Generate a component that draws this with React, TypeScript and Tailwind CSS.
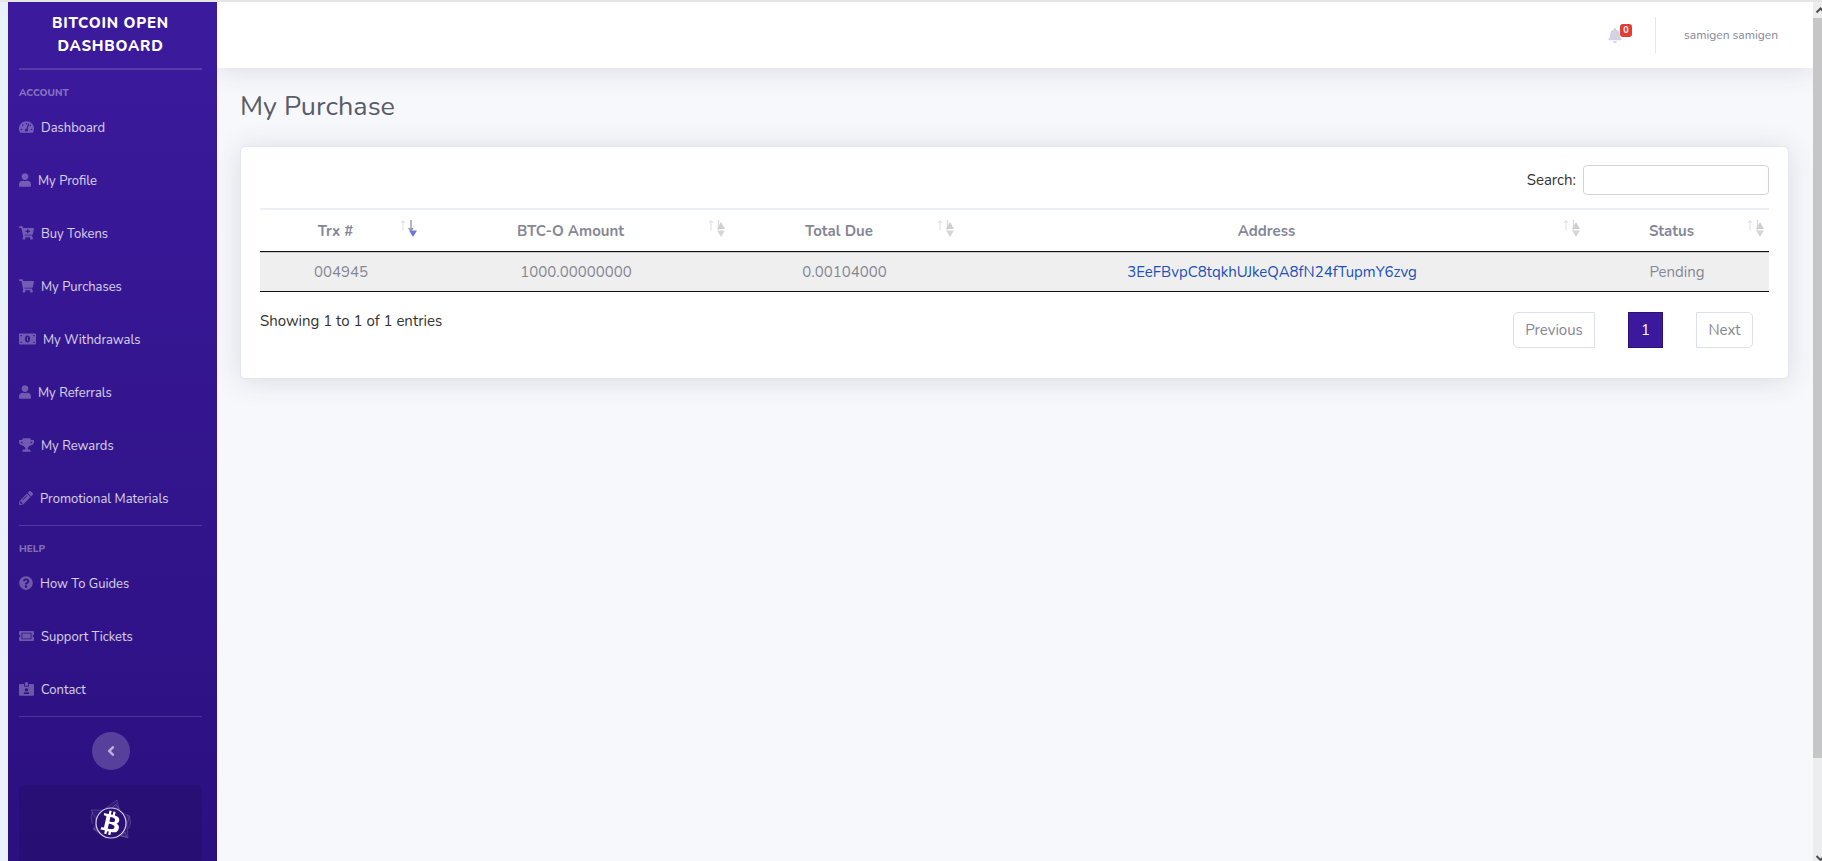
import {
  FaAngleLeft,
  FaBell,
  FaBtc,
  FaCartPlus,
  FaIdCardAlt,
  FaPencilAlt,
  FaQuestionCircle,
  FaShoppingCart,
  FaTachometerAlt,
  FaTicketAlt,
  FaTrophy,
  FaUser,
} from "react-icons/fa";

// solid banknote with a round cut-out and notched corners
function MoneyBill({ className }: { className?: string }) {
  return (
    <svg viewBox="0 0 17 14" className={className} fill="currentColor">
      <path
        fillRule="evenodd"
        d="M1 1.5 H16 A1 1 0 0 1 17 2.5 V11.5 A1 1 0 0 1 16 12.5 H1 A1 1 0 0 1 0 11.5 V2.5 A1 1 0 0 1 1 1.5 Z M8.5 3.6 C6.9 3.6 5.9 5.1 5.9 7 S6.9 10.4 8.5 10.4 S11.1 8.9 11.1 7 S10.1 3.6 8.5 3.6 Z M1.5 3 V4.5 A1.5 1.5 0 0 0 3 3 Z M15.5 3 V4.5 A1.5 1.5 0 0 1 14 3 Z M1.5 11 V9.5 A1.5 1.5 0 0 1 3 11 Z M15.5 11 V9.5 A1.5 1.5 0 0 0 14 11 Z"
      />
      <path d="M8 5.3 H9 V8.7 H8 Z" />
    </svg>
  );
}

const accountLinks = [
  { icon: FaTachometerAlt, size: "w-[15px]", label: "Dashboard" },
  { icon: FaUser, size: "w-3", label: "My Profile" },
  { icon: FaCartPlus, size: "w-[15px]", label: "Buy Tokens" },
  { icon: FaShoppingCart, size: "w-[15px]", label: "My Purchases" },
  { icon: MoneyBill, size: "w-[17px]", label: "My Withdrawals" },
  { icon: FaUser, size: "w-3", label: "My Referrals" },
  { icon: FaTrophy, size: "w-[15px]", label: "My Rewards" },
  { icon: FaPencilAlt, size: "w-[14px]", label: "Promotional Materials" },
];

const helpLinks = [
  { icon: FaQuestionCircle, size: "w-[14px]", label: "How To Guides" },
  { icon: FaTicketAlt, size: "w-[15px]", label: "Support Tickets" },
  { icon: FaIdCardAlt, size: "w-[15px]", label: "Contact" },
];

const columns = [
  { title: "Trx #", width: "w-[162px]", sorted: true },
  { title: "BTC-O Amount", width: "w-[308px]", sorted: false },
  { title: "Total Due", width: "w-[229px]", sorted: false },
  { title: "Address", width: "w-auto", sorted: false },
  { title: "Status", width: "w-[184px]", sorted: false },
];

const purchases = [
  {
    trx: "004945",
    amount: "1000.00000000",
    due: "0.00104000",
    address: "3EeFBvpC8tqkhUJkeQA8fN24fTupmY6zvg",
    status: "Pending",
  },
];

function NavGroup({ title, links }: { title: string; links: typeof accountLinks }) {
  return (
    <div>
      <h2 className="h-[31px] pt-[17px] text-[10px] leading-3 font-extrabold uppercase text-white/40">{title}</h2>
      <ul>
        {links.map(({ icon: Icon, size, label }) => (
          <li key={label}>
            <a href="#" className="flex h-[53px] items-center gap-[7px] pt-0.5 text-[13px] whitespace-nowrap text-white/80">
              <Icon className={`mb-1 h-[14px] shrink-0 text-white/30 ${size}`} />
              {label}
            </a>
          </li>
        ))}
      </ul>
    </div>
  );
}

function Logo() {
  return (
    <svg viewBox="0 0 44 44" className="h-11 w-11 text-white">
      <g fill="currentColor" fillOpacity="0.05" stroke="currentColor" strokeOpacity="0.22" strokeWidth="0.7">
        <path d="M28 0 L31 12 L41 16 L38 24 L39 38 L28 35 L17 38 L4 29 L8 22 L2 10 L14 10 Z" />
        <path d="M27 4 L22 9 H30 Z M5 29 L9 25 L11 32 Z M36 32 L38 37 L32 36 Z M38 15 Q45 21 39 29 M4 12 Q0 18 4 24" />
      </g>
      <circle cx="22" cy="23" r="15" fill="#2a1075" stroke="currentColor" strokeOpacity="0.8" strokeWidth="1.2" />
      <g transform="rotate(13 22 23)">
        <FaBtc x={10} y={11} size={24} />
      </g>
    </svg>
  );
}

function Sidebar() {
  return (
    <aside className="flex w-[209px] shrink-0 flex-col bg-linear-to-b from-[#3c1a9d] to-[#2b1080] pr-[15px] pl-[11px]">
      <a
        href="#"
        className="flex h-[66px] items-center justify-center px-5 text-center text-[15px] leading-[23px] font-extrabold tracking-wider text-white uppercase"
      >
        Bitcoin Open Dashboard
      </a>
      <hr className="border-t-2 border-white/15" />
      <NavGroup title="Account" links={accountLinks} />
      <hr className="border-t border-white/15" />
      <NavGroup title="Help" links={helpLinks} />
      <hr className="border-t border-white/15" />
      <button
        type="button"
        aria-label="Collapse sidebar"
        className="mx-auto mt-[15px] flex h-[38px] w-[38px] shrink-0 items-center justify-center rounded-full bg-white/20 text-white/60"
      >
        <FaAngleLeft className="h-4 w-4" />
      </button>
      <div className="mt-[15px] flex flex-1 justify-center rounded-t-[5px] bg-black/10 pt-[15px]">
        <Logo />
      </div>
    </aside>
  );
}

function Topbar() {
  return (
    <header className="flex h-[66px] items-center justify-end bg-white pr-[35px] shadow-[0_2px_28px_rgba(58,59,69,0.15)]">
      <a href="#" aria-label="Alerts" className="relative mr-[33px] text-[#d1d3e2]">
        <FaBell className="h-[15px] w-[14px]" />
        <span className="absolute -top-1 left-3 flex h-[13px] w-3 items-center justify-center rounded-[3px] bg-[#e23c33] text-[9px] leading-none font-bold text-white">
          0
        </span>
      </a>
      <div className="h-9 border-l border-[#e3e6f0]" />
      <a href="#" className="ml-7 text-[12px] text-[#858796]">
        samigen samigen
      </a>
    </header>
  );
}

function SortMark({ sorted }: { sorted: boolean }) {
  return (
    <svg viewBox="0 0 17 18" className="absolute top-[9px] right-[5px] h-[18px] w-[17px]" fill="none">
      <path d="M3 11.5 V2 M1 4 L3 1.5 L5 4" stroke="#dcdce0" />
      {sorted ? (
        <>
          <path d="M11 1 V11 M8.5 9 L11 11.5 L13 9" stroke="#9496a8" strokeWidth="1.4" />
          <path d="M9 11.5 H17 L13 18 Z" fill="#6a78d8" />
        </>
      ) : (
        <>
          <path d="M10.5 1 V11" stroke="#d8d8dc" strokeWidth="1.2" />
          <path d="M13 3 L17 10 H9 Z" fill="#cfcfd2" />
          <path d="M9 11.5 H17 L13 18 Z" fill="#d6d6d8" />
        </>
      )}
    </svg>
  );
}

function PurchaseTable() {
  return (
    <table className="w-full table-fixed border-separate border-spacing-0 text-center text-[15px] leading-6 text-[#858796]">
      <thead>
        <tr>
          {columns.map(({ title, width, sorted }) => (
            <th
              key={title}
              className={`relative h-[44px] border-t-2 border-b border-t-[#eceef5] border-b-[#111111] pr-[30px] pl-[19px] font-bold ${width}`}
            >
              {title}
              <SortMark sorted={sorted} />
            </th>
          ))}
        </tr>
      </thead>
      <tbody>
        {purchases.map((row) => (
          <tr key={row.trx} className="bg-[#efefef] *:h-10 *:border-t *:border-b *:border-t-[#c9cad4] *:border-b-[#111111]">
            <td>{row.trx}</td>
            <td>{row.amount}</td>
            <td>{row.due}</td>
            <td>
              <a href="#" className="text-[#2250b8]">
                {row.address}
              </a>
            </td>
            <td>{row.status}</td>
          </tr>
        ))}
      </tbody>
    </table>
  );
}

function Pagination() {
  return (
    <nav aria-label="Pages" className="flex gap-[33px] pr-4 text-[15px] text-[#858796]">
      <button type="button" className="h-9 w-[82px] rounded-l-[5px] border border-[#dddfeb]">
        Previous
      </button>
      <button type="button" className="h-9 w-[35px] border border-[#2c1179] bg-[#3b189c] text-white">
        1
      </button>
      <button type="button" className="h-9 w-[57px] rounded-r-[5px] border border-[#dddfeb]">
        Next
      </button>
    </nav>
  );
}

function Scrollbar() {
  return (
    <div className="flex w-[9px] shrink-0 flex-col overflow-hidden bg-[#ededed]">
      <svg viewBox="0 0 9 16" className="h-4 w-[9px] shrink-0" fill="none" stroke="#505050" strokeWidth="2">
        <path d="M3.5 10.5 L7.5 6.5 L11.5 10.5" />
      </svg>
      <div className="h-[86vh] shrink-0 bg-[#c6c6c6]" />
      <div className="flex-1" />
      <svg viewBox="0 0 9 16" className="h-4 w-[9px] shrink-0" fill="none" stroke="#505050" strokeWidth="2">
        <path d="M3.5 11 L7.5 15 L11.5 11" />
      </svg>
    </div>
  );
}

export default function App() {
  return (
    <div className="flex h-screen overflow-hidden border-t-2 border-[#e5e5e5] bg-[#f7f8fc] font-['Nunito','Lato',sans-serif]">
      <div className="w-2 shrink-0 bg-[#e9f1fa]" />
      <Sidebar />
      <div className="min-w-0 flex-1 overflow-hidden">
        <Topbar />
        <main className="pt-[21px] pr-6 pl-[23px]">
          <h1 className="text-[27px] leading-9 text-[#5a5c69]">My Purchase</h1>
          <section className="mt-[21px] rounded-[5px] border border-[#e3e6f0] bg-white px-[19px] pt-[18px] pb-[30px] shadow-[0_2px_28px_rgba(58,59,69,0.15)]">
            <div className="mb-[13px] flex items-center justify-end gap-[7px]">
              <label htmlFor="search" className="text-[15px] leading-6 text-[#333333]">
                Search:
              </label>
              <input
                id="search"
                type="search"
                className="h-[30px] w-[186px] rounded-[4px] border border-[#d1d3e2] bg-white px-2 text-[14px] outline-none"
              />
            </div>
            <PurchaseTable />
            <div className="flex justify-between pt-5">
              <p className="text-[15px] leading-[18px] text-[#333333]">Showing 1 to 1 of 1 entries</p>
              <Pagination />
            </div>
          </section>
        </main>
      </div>
      <Scrollbar />
    </div>
  );
}
